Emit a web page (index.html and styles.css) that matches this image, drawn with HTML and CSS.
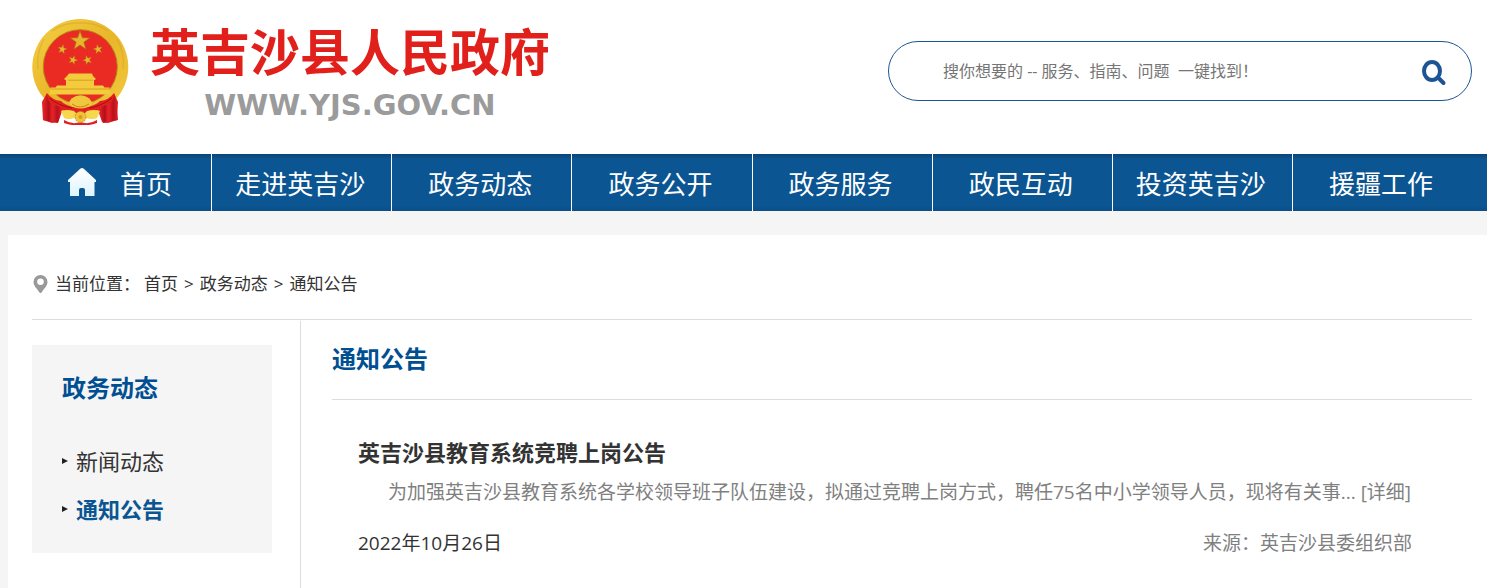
FILE: index.html
```html
<!DOCTYPE html>
<html lang="zh-CN">
<head>
<meta charset="utf-8">
<meta name="viewport" content="width=device-width, initial-scale=1">
<title>通知公告 - 英吉沙县人民政府</title>
<link rel="stylesheet" href="styles.css">
</head>
<body>
<header class="header">
  <a class="brand" href="#">
    <svg class="emblem" viewBox="0 0 97 106" aria-hidden="true">
      <defs>
        <linearGradient id="gold" x1="0" y1="0" x2="1" y2="1">
          <stop offset="0" stop-color="#f3cf45"/>
          <stop offset=".5" stop-color="#e9b62a"/>
          <stop offset="1" stop-color="#f2cb3f"/>
        </linearGradient>
        <linearGradient id="drape" x1="0" y1="0" x2="1" y2="0">
          <stop offset="0" stop-color="#e8222a"/>
          <stop offset=".3" stop-color="#b3101a"/>
          <stop offset=".5" stop-color="#e8222a"/>
          <stop offset=".75" stop-color="#b9121b"/>
          <stop offset="1" stop-color="#de1e26"/>
        </linearGradient>
        <path id="star" d="M0-10 2.4-3.2 9.5-3.1 3.8 1.2 5.9 8.1 0 4-5.9 8.1-3.8 1.2-9.5-3.1-2.4-3.2Z"/>
      </defs>
      <circle cx="48.300" cy="48" r="48" fill="url(#gold)"/>
      <path d="M12 20q-8 14-6 30M85 20q8 14 6 30M20 12q12-9 28-8 16-1 28 8" fill="none" stroke="#d39a1c" stroke-width="1.500" opacity=".4"/>
      <circle cx="48.300" cy="47.700" r="37" fill="#e92b24" stroke="#b88317"/>
      <g fill="#e6b62d" stroke="#b3701b" stroke-width=".7">
        <use href="#star" transform="translate(48 22)"/>
        <use href="#star" transform="translate(30.300 30.300) rotate(12) scale(.48)"/>
        <use href="#star" transform="translate(66 30.300) rotate(-12) scale(.48)"/>
        <use href="#star" transform="translate(41 41) rotate(20) scale(.48)"/>
        <use href="#star" transform="translate(55.500 41) rotate(-20) scale(.48)"/>
      </g>
      <path d="M37 54.500h23l1 2.500 3 3-2 1.200v5.300h9l1.500 2h5l1 7h-61l1-7h5l1.500-2h9v-5.300l-2-1.200 3-3z" fill="#f3cb3d"/>
      <path d="M36 61.200h25M19 70h59" stroke="#cf9420" stroke-width=".8"/>
      <path d="M37 86a11.500 9.500 0 0 1 23 0l-5 4H42z" fill="#f1c83d" stroke="#c28a1b" stroke-width=".7"/>
      <path d="M43.500 87a5 4.500 0 0 1 10 0z" fill="#e0a82c"/>
      <path d="M29 91h13l6 4 6-4h13l-5 8q-5 2-9-1l-5 6-5-6q-4 3-9 1z" fill="#f5d54a"/>
      <path d="M15 74q5 7 14 8 4 4 12 6h15q8-2 12-6 9-1 14-8l4 9-1 18-9 3-6-1-4-12q-8 5-18 5t-18-5l-4 12-6 1-9-3-1-18z" fill="#e2201f"/>
      <path d="M15 75q0 7 5 10l8 3 2 4-4 12-6-1-9-2 2-19z" fill="url(#drape)"/>
      <path d="M82 75q0 7-5 10l-8 3-2 4 4 12 6-1 9-2-2-19z" fill="url(#drape)"/>
      <path d="M17 79q10 8 23 10M80 79q-10 8-23 10" fill="none" stroke="#a70e16" stroke-width="1"/>
      <path d="M37 85.500a11.500 9 0 0 1 23 0q-5 4-11.500 4T37 85.500z" fill="#f1c83d"/>
      <path d="M40 85q8 6 17 0" fill="none" stroke="#c28a1b" stroke-width="1"/>
      <path d="M29 92q6-2 13 0l3 3-3 4q-6 2-10 0z" fill="#f5d84d"/>
      <path d="M68 92q-6-2-13 0l-3 3 3 4q6 2 10 0z" fill="#f5d84d"/>
      <path d="M32 101q8 5 16.500 2Q57 106 65 101v3q-8 3-16.500 2Q40 107 32 104z" fill="#df1e25"/>
      <circle cx="48.500" cy="98" r="5.500" fill="#f0c43a" stroke="#d09a20" stroke-width="1" stroke-dasharray="2 1"/>
      <circle cx="48.500" cy="98" r="2" fill="#d89b22"/>
    </svg>
    <span class="brand-text">
      <span class="brand-name">英吉沙县人民政府</span>
      <span class="brand-url">WWW.YJS.GOV.CN</span>
    </span>
  </a>
  <form class="search" role="search">
    <input class="search-input" type="text" aria-label="站内搜索" placeholder="搜你想要的 -- 服务、指南、问题  一键找到！">
    <button class="search-button" type="button" aria-label="搜索">
      <svg class="search-icon" viewBox="0 0 26 26" aria-hidden="true"><ellipse cx="11" cy="11" rx="8" ry="9" fill="none" stroke="#1d5594" stroke-width="4"/><path d="M18 18.500l4.500 4.500" stroke="#1d5594" stroke-width="4" stroke-linecap="round"/></svg>
    </button>
  </form>
</header>

<nav class="nav">
  <a class="nav-item nav-home" href="#">
    <svg class="home-icon" viewBox="0 0 28 28" aria-hidden="true"><defs><linearGradient id="house" x1="0" y1="0" x2="0" y2="1"><stop offset="0" stop-color="#fff"/><stop offset="1" stop-color="#def4ff"/></linearGradient></defs><path d="M12.500.5Q14-.5 15.500.5L28 12v2h-1.500v14H17v-6q0-2-2-2h-2q-2 0-2 2v6H2V14H0v-2z" fill="url(#house)"/></svg>
    <span>首页</span>
  </a>
  <a class="nav-item" href="#">走进英吉沙</a>
  <a class="nav-item" href="#">政务动态</a>
  <a class="nav-item" href="#">政务公开</a>
  <a class="nav-item" href="#">政务服务</a>
  <a class="nav-item" href="#">政民互动</a>
  <a class="nav-item" href="#">投资英吉沙</a>
  <a class="nav-item" href="#">援疆工作</a>
</nav>

<div class="panel">
  <div class="crumbs">
    <svg class="pin-icon" viewBox="0 0 14 18" aria-hidden="true"><path fill="#999" fill-rule="evenodd" d="M7 0a7 7 0 0 1 7 7c0 4-4 7-5.500 10q-1.500 2-3 0C4 14 0 11 0 7a7 7 0 0 1 7-7zm0 3.500a3.300 3.300 0 1 0 0 6.600 3.300 3.300 0 0 0 0-6.600z"/></svg>
    <span class="crumb-label">当前位置：</span>
    <a href="#">首页</a><span>&gt;</span><a href="#">政务动态</a><span>&gt;</span><a href="#">通知公告</a>
  </div>
  <div class="columns">
    <aside class="side">
      <div class="side-box">
        <h2 class="side-title">政务动态</h2>
        <ul class="side-list">
          <li class="side-item"><a href="#">新闻动态</a></li>
          <li class="side-item side-active"><a href="#">通知公告</a></li>
        </ul>
      </div>
    </aside>
    <main class="main">
      <h1 class="main-title">通知公告</h1>
      <article class="article">
        <h3 class="article-title"><a href="#">英吉沙县教育系统竞聘上岗公告</a></h3>
        <p class="article-text">为加强英吉沙县教育系统各学校领导班子队伍建设，拟通过竞聘上岗方式，聘任75名中小学领导人员，现将有关事... <a href="#">[详细]</a></p>
        <div class="article-meta"><time datetime="2022-10-26">2022年10月26日</time><span class="source">来源：英吉沙县委组织部</span></div>
      </article>
    </main>
  </div>
</div>
</body>
</html>
```

FILE: styles.css
```css
* { box-sizing: border-box; }

body {
  margin: 0;
  min-height: 100vh;
  display: flex;
  flex-direction: column;
  background: #f5f5f5;
  color: #333;
  font-family: "Open Sans", "Noto Sans CJK SC", sans-serif;
}

a { color: inherit; text-decoration: none; }
h1, h2, h3, p, ul { margin: 0; padding: 0; }

.header {
  display: flex;
  justify-content: space-between;
  align-items: flex-start;
  padding: 19px 15px 29px 32px;
  background: #fff;
}

.brand { display: flex; gap: 21px; }
.emblem { width: 97px; height: 106px; }
.brand-text { display: flex; flex-direction: column; align-items: center; padding-top: 4px; }
.brand-name {
  color: #e1201b;
  font-family: "Noto Sans CJK SC", sans-serif;
  font-size: 50px;
  font-weight: 700;
  line-height: 52px;
}
.brand-url {
  margin-top: 10px;
  color: #9b9b9b;
  font-family: "DejaVu Sans", sans-serif;
  font-size: 29px;
  font-weight: 700;
  line-height: 40px;
}

.search {
  display: flex;
  align-items: center;
  width: 42%;
  max-width: 584px;
  height: 60px;
  margin-top: 22px;
  padding: 0 24px 0 54px;
  border: 1px solid #1d5594;
  border-radius: 30px;
}
.search-input {
  flex: 1;
  min-width: 0;
  padding: 0;
  border: 0;
  outline: 0;
  background: none;
  color: #333;
  font: 16px/24px "Open Sans", "Noto Sans CJK SC", sans-serif;
}
.search-input::placeholder { color: #757575; }
.search-button { display: flex; padding: 4px 0 0; border: 0; background: none; cursor: pointer; }
.search-icon { width: 26px; height: 26px; }

.nav {
  display: flex;
  padding: 0 15px 0 32px;
  background: linear-gradient(#0b4474, #0b5592 5px, #0b5592 52px, #0b4f88);
}
.nav-item {
  flex: 1;
  display: flex;
  justify-content: center;
  align-items: center;
  height: 57px;
  padding: 3px 3px 0 0;
  border-right: 1px solid #fff;
  color: #fff;
  font-size: 26px;
  line-height: 54px;
  white-space: nowrap;
}
.nav-item:last-child { border-right: 0; }
.nav-home { gap: 24px; align-items: flex-start; }
.home-icon { width: 28px; height: 28px; margin-top: 11px; }

.panel {
  flex: 1;
  display: flex;
  flex-direction: column;
  margin: 24px 0 0 8px;
  padding: 0 15px 0 24px;
  background: #fff;
}
.crumbs {
  display: flex;
  align-items: center;
  gap: 6px;
  padding: 34px 0 20px;
  border-bottom: 1px solid #ddd;
  font-size: 17px;
  line-height: 30px;
}
.pin-icon { width: 17px; height: 18px; }
.crumb-label { margin-right: -2px; }

.columns { flex: 1; display: flex; padding-top: 1px; }
.side { flex: none; width: 268px; padding: 24px 28px 24px 0; }
.side-box { padding: 22px 0 20px 30px; background: #f5f5f5; }
.side-title { color: #004f93; font-size: 24px; line-height: 42px; }
.side-list { padding-top: 28px; list-style: none; }
.side-item {
  display: flex;
  align-items: center;
  gap: 8px;
  font-size: 22px;
  line-height: 48px;
}
.side-item::before {
  content: "";
  border-left: 6px solid #222;
  border-top: 3px solid transparent;
  border-bottom: 3px solid transparent;
}
.side-active { color: #0b5592; font-weight: 700; }

.main { flex: 1; min-width: 0; padding-left: 31px; border-left: 1px solid #ddd; }
.main-title {
  padding-bottom: 2px;
  border-bottom: 1px solid #ddd;
  color: #004f93;
  font-size: 24px;
  line-height: 76px;
}
.article { padding: 33px 26px 30px; }
.article-title { font-size: 22px; line-height: 38px; }
.article-text { padding-left: 30px; color: #808080; font-size: 19px; line-height: 42px; }
.article-meta {
  display: flex;
  justify-content: space-between;
  padding: 10px 34px 0 0;
  font-size: 19px;
  line-height: 40px;
}
.source { color: #808080; }
```
